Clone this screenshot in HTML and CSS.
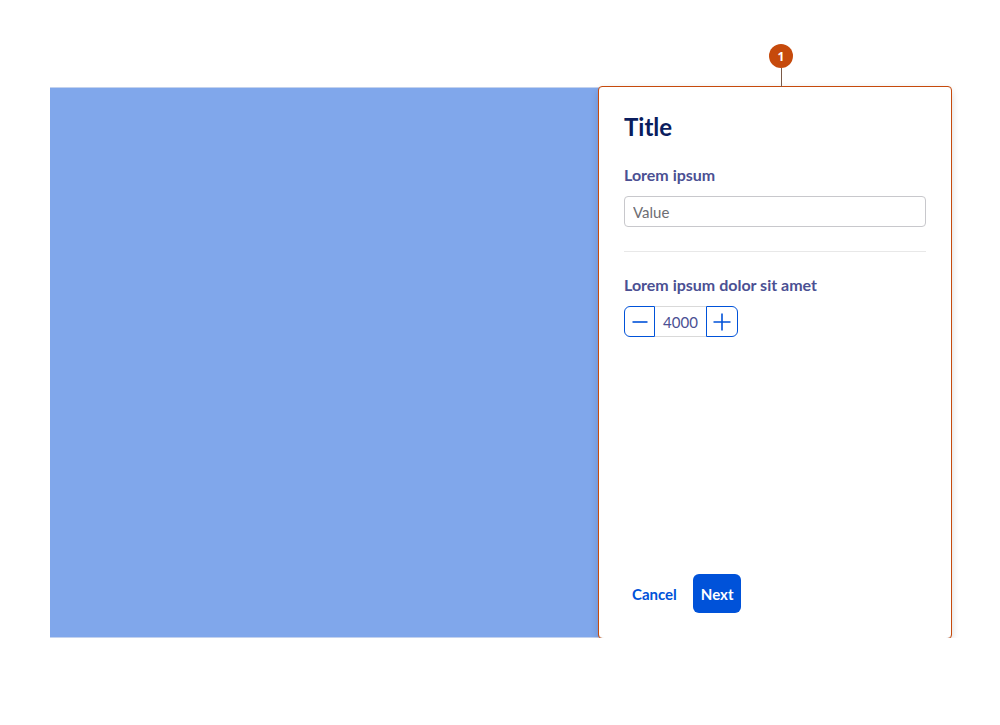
FILE: index.html
```html
<!DOCTYPE html>
<html lang="en">
<head>
<meta charset="utf-8">
<title>Panel</title>
<link rel="stylesheet" href="styles.css">
</head>
<body>
<div class="stage">
  <div class="preview"></div>
  <aside class="panel">
    <div class="annot-outline"></div>
    <div class="annot-marker"><span>1</span></div>
    <div class="panel-body">
      <h1 class="title">Title</h1>
      <label class="label" for="val">Lorem ipsum</label>
      <input id="val" class="text-input" type="text" placeholder="Value">
      <hr class="divider">
      <div class="label">Lorem ipsum dolor sit amet</div>
      <div class="stepper">
        <button class="step-btn step-minus" aria-label="Decrease">
          <svg width="16" height="16" viewBox="0 0 16 16"><path d="M0.5 8h15" stroke="#0052d9" stroke-width="1.6" fill="none"/></svg>
        </button>
        <div class="step-value">4000</div>
        <button class="step-btn step-plus" aria-label="Increase">
          <svg width="18" height="18" viewBox="0 0 18 18"><path d="M0.5 9h17M9 0.5v17" stroke="#0052d9" stroke-width="1.6" fill="none"/></svg>
        </button>
      </div>
    </div>
    <div class="panel-footer">
      <button class="btn-link">Cancel</button>
      <button class="btn-primary">Next</button>
    </div>
  </aside>
</div>
</body>
</html>
```
FILE: styles.css
```css
html, body {
  margin: 0;
  padding: 0;
  background: #ffffff;
  font-family: "Source Sans Pro", "Lato", "Noto Sans", sans-serif;
}

.stage {
  display: flex;
  margin: 87px 0 0 50px;
  width: 901px;
  height: 551px;
}

.preview {
  width: 549px;
  background: #80a7eb;
  border-top: 1px solid #c3d2ee;
  border-bottom: 1px solid #c3d2ee;
  box-sizing: border-box;
}

.panel {
  position: relative;
  width: 352px;
  background: #ffffff;
  border-radius: 5px;
  box-shadow: 0 3px 9px rgba(0, 0, 0, 0.2);
  display: flex;
  flex-direction: column;
  justify-content: space-between;
  padding: 25px 25px 25px 25px;
  box-sizing: border-box;
}

.annot-outline {
  position: absolute;
  left: -1px;
  top: -1px;
  right: -1px;
  bottom: -1px;
  border: 1px solid #c64a0c;
  border-radius: 4px;
  pointer-events: none;
}

.annot-marker {
  position: absolute;
  left: 170px;
  top: -43px;
  width: 24px;
  height: 24px;
  border-radius: 50%;
  background: #c64a0c;
  color: #ffffff;
  font-family: "Open Sans", "Lato", sans-serif;
  font-weight: 700;
  font-size: 12px;
  display: flex;
  align-items: center;
  justify-content: center;
}

.annot-marker::after {
  content: "";
  position: absolute;
  left: 11.5px;
  top: 24px;
  width: 1px;
  height: 19px;
  background: #7a5a48;
}

.panel-body {
  display: flex;
  flex-direction: column;
}

.title {
  margin: 0 0 23px 0;
  font-size: 24px;
  line-height: 30px;
  font-weight: 700;
  color: #0a1d5e;
}

.label {
  display: block;
  font-size: 16px;
  line-height: 20px;
  font-weight: 700;
  color: #4b5093;
  margin-bottom: 11px;
}

.text-input {
  height: 31px;
  box-sizing: border-box;
  border: 1px solid #c8c8cc;
  border-radius: 4px;
  padding: 0 8px;
  font-family: inherit;
  font-size: 15px;
  color: #333;
  outline: none;
}

.text-input::placeholder {
  color: #6e6e73;
}

.divider {
  border: 0;
  border-top: 1px solid #e8e8e8;
  margin: 24px 0 23px 0;
  height: 0;
}

.stepper {
  display: flex;
  height: 31px;
  width: 114px;
}

.step-btn {
  width: 31px;
  height: 31px;
  box-sizing: border-box;
  border: 1px solid #0052d9;
  background: #ffffff;
  padding: 0;
  display: flex;
  align-items: center;
  justify-content: center;
  cursor: pointer;
}

.step-minus {
  border-radius: 6px 0 0 6px;
}

.step-plus {
  width: 32px;
  border-radius: 0 6px 6px 0;
}

.step-value {
  width: 51px;
  height: 31px;
  box-sizing: border-box;
  border-top: 1px solid #d9d9d9;
  border-bottom: 1px solid #d9d9d9;
  display: flex;
  align-items: center;
  justify-content: center;
  font-size: 15px;
  color: #4b5093;
}

.panel-footer {
  display: flex;
  align-items: center;
  gap: 8px;
}

.btn-link,
.btn-primary {
  font-family: inherit;
  font-size: 15px;
  font-weight: 700;
  height: 39px;
  padding: 0 8px;
  border: 0;
  border-radius: 6px;
  cursor: pointer;
}

.btn-link {
  background: transparent;
  color: #0052d9;
}

.btn-primary {
  background: #0052d9;
  color: #ffffff;
}
```
